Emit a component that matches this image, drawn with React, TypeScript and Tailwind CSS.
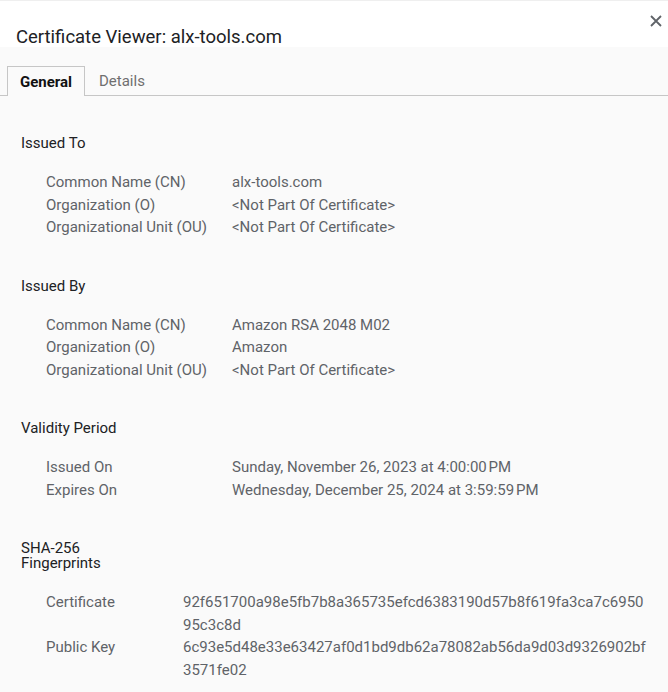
import React from 'react'

type Row = { label: string; value: string }

const SECTIONS: { title: string; rows: Row[]; wide?: boolean }[] = [
  {
    title: 'Issued To',
    rows: [
      { label: 'Common Name (CN)', value: 'alx-tools.com' },
      { label: 'Organization (O)', value: '<Not Part Of Certificate>' },
      { label: 'Organizational Unit (OU)', value: '<Not Part Of Certificate>' },
    ],
  },
  {
    title: 'Issued By',
    rows: [
      { label: 'Common Name (CN)', value: 'Amazon RSA 2048 M02' },
      { label: 'Organization (O)', value: 'Amazon' },
      { label: 'Organizational Unit (OU)', value: '<Not Part Of Certificate>' },
    ],
  },
  {
    title: 'Validity Period',
    rows: [
      { label: 'Issued On', value: 'Sunday, November 26, 2023 at 4:00:00\u202FPM' },
      { label: 'Expires On', value: 'Wednesday, December 25, 2024 at 3:59:59\u202FPM' },
    ],
  },
  {
    title: 'SHA-256 Fingerprints',
    wide: true,
    rows: [
      { label: 'Certificate', value: '92f651700a98e5fb7b8a365735efcd6383190d57b8f619fa3ca7c695095c3c8d' },
      { label: 'Public Key', value: '6c93e5d48e33e63427af0d1bd9db62a78082ab56da9d03d9326902bf3571fe02' },
    ],
  },
]

export default function App() {
  return (
    <div className="min-h-screen bg-[#fafafa] font-['Roboto',sans-serif]">
      {/* title bar */}
      <div className="relative h-[47px] bg-white border-t border-[#efefef] pl-4 pt-[24px]">
        <h1 className="text-[18.5px] leading-6 text-[#202124] font-normal">Certificate Viewer: alx-tools.com</h1>
        <button className="absolute right-[5px] top-[13px] w-[14px] h-[14px] flex items-center justify-center text-[#5f6368]">
          <svg width="12" height="12" viewBox="0 0 12 12" fill="none" stroke="currentColor" strokeWidth="1.8">
            <path d="M1 1 L11 11 M11 1 L1 11" />
          </svg>
        </button>
      </div>

      {/* tabs */}
      <div className="mt-[19px] flex border-b border-[#c6c6c6] pl-[7px] text-[15px]">
        <div className="-mb-px h-[30px] w-[78px] pt-px flex items-center justify-center border border-b-0 border-[#c6c6c6] bg-[#fafafa] font-bold text-[#111]">
          General
        </div>
        <div className="h-[29px] pt-[2px] px-[14px] flex items-center text-[#6f6f6f]">Details</div>
      </div>

      {/* content */}
      <div className="flex flex-col gap-[40px] pt-[40px] pl-[21px] text-[15px]">
        {SECTIONS.map(s => (
          <div key={s.title}>
            <div className="w-[110px] leading-[15px] text-[#202124]">{s.title}</div>
            <div
              className={
                s.wide
                  ? 'mt-[20px] ml-[25px] grid grid-cols-[137px_465px] leading-[22.6px] text-[#5f6368]'
                  : 'mt-[20px] ml-[25px] grid grid-cols-[186px_1fr] leading-[22.5px] text-[#5f6368]'
              }
            >
              {s.rows.map(r => (
                <React.Fragment key={r.label}>
                  <div>{r.label}</div>
                  <div className="break-all">{r.value}</div>
                </React.Fragment>
              ))}
            </div>
          </div>
        ))}
      </div>
    </div>
  )
}
